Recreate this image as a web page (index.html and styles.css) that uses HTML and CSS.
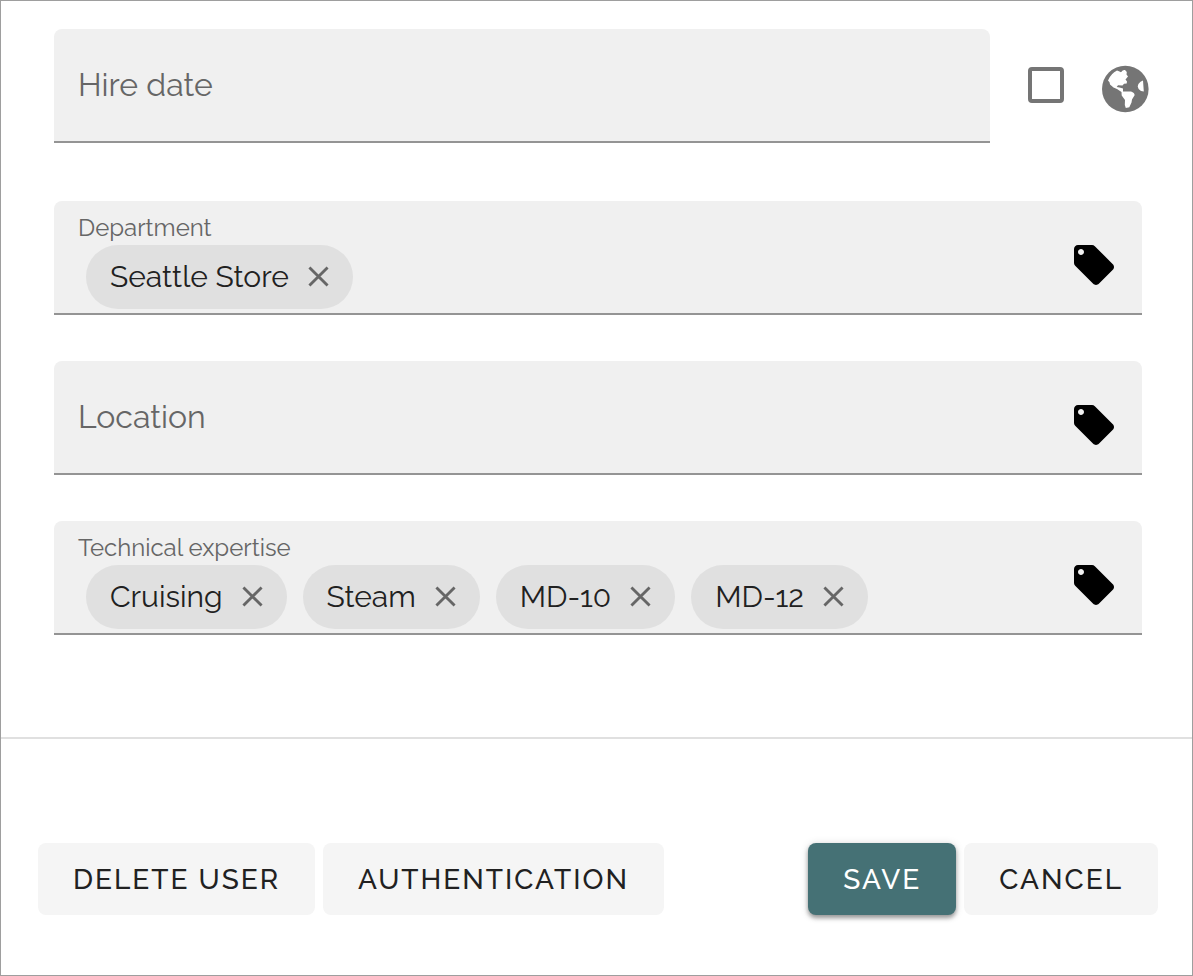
FILE: index.html
```html
<!DOCTYPE html>
<html lang="en">
<head>
<meta charset="utf-8">
<meta name="viewport" content="width=device-width, initial-scale=1">
<title>Edit user</title>
<link rel="stylesheet" href="styles.css">
</head>
<body>
<svg class="sprite" aria-hidden="true">
  <symbol id="tag" viewBox="0 0 24 24"><path d="M21.41 11.58l-9-9C12.05 2.22 11.55 2 11 2H4c-1.1 0-2 .9-2 2v7c0 .55.22 1.05.59 1.42l9 9c.36.36.86.58 1.41.58s1.05-.22 1.41-.59l7-7c.37-.36.59-.86.59-1.41s-.23-1.06-.59-1.42zM5.5 7C4.67 7 4 6.33 4 5.5S4.67 4 5.5 4 7 4.67 7 5.5 6.33 7 5.5 7z"/></symbol>
  <symbol id="close" viewBox="0 0 22 22"><path d="M1.5 1.5l19 19M20.5 1.5l-19 19" fill="none" stroke="currentColor" stroke-width="3"/></symbol>
</svg>
<form class="dialog">
  <div class="fields">
    <div class="row">
      <div class="field">
        <label class="placeholder" for="hire">Hire date</label>
        <input class="entry" id="hire" type="text">
      </div>
      <input class="check" type="checkbox" aria-label="Include hire date">
      <button class="icon-button" type="button" aria-label="Visibility">
        <svg class="globe" viewBox="0 0 48 48"><circle cx="24.3" cy="24" r="23.3" fill="#757575"/><path fill="#fff" d="M7 15.5Q10 8.500 16 5.600L18.500 6.500L20 7.300Q22 4.500 24 5L25.800 7L25.500 9.500L27 11.500L24.500 14.500L26 16.500L25.700 18.500L23 18.800L21.500 20.500L17 20.300L15.700 22L18.500 22.500L22 23.500L22 26.500H30Q33.700 27.800 33.600 30.200L31 34.500L30.500 37.500L28.300 42.200L24.800 43L23.800 40L24 35L20.700 30.500L20.500 27L16 24L12.500 22.500L9 19.500L8.500 17.200ZM42 15.5L39.500 16.700Q37 18.500 36.700 21.500Q37 24.500 40 26L42.800 26.500Z"/></svg>
      </button>
    </div>
    <div class="field">
      <label class="caption" for="department">Department</label>
      <div class="chips">
        <span class="chip">Seattle Store<button class="remove" type="button" aria-label="Remove Seattle Store"><svg><use href="#close"/></svg></button></span>
        <input class="chip-entry" id="department" type="text">
      </div>
      <button class="tag-button" type="button" aria-label="Choose department"><svg><use href="#tag"/></svg></button>
    </div>
    <div class="field">
      <label class="placeholder" for="location">Location</label>
      <input class="entry" id="location" type="text">
      <button class="tag-button" type="button" aria-label="Choose location"><svg><use href="#tag"/></svg></button>
    </div>
    <div class="field">
      <label class="caption" for="expertise">Technical expertise</label>
      <div class="chips">
        <span class="chip">Cruising<button class="remove" type="button" aria-label="Remove Cruising"><svg><use href="#close"/></svg></button></span>
        <span class="chip">Steam<button class="remove" type="button" aria-label="Remove Steam"><svg><use href="#close"/></svg></button></span>
        <span class="chip">MD-10<button class="remove" type="button" aria-label="Remove MD-10"><svg><use href="#close"/></svg></button></span>
        <span class="chip">MD-12<button class="remove" type="button" aria-label="Remove MD-12"><svg><use href="#close"/></svg></button></span>
        <input class="chip-entry" id="expertise" type="text">
      </div>
      <button class="tag-button" type="button" aria-label="Choose technical expertise"><svg><use href="#tag"/></svg></button>
    </div>
  </div>
  <div class="actions">
    <button class="button" type="button">DELETE USER</button>
    <button class="button" type="button">AUTHENTICATION</button>
    <span class="spacer"></span>
    <button class="button primary" type="submit">SAVE</button>
    <button class="button" type="button">CANCEL</button>
  </div>
</form>
</body>
</html>
```
FILE: styles.css
```css
* { box-sizing: border-box; }
body { margin: 0; background: #fff; font-family: Raleway, Lato, sans-serif; color: #212121; }
button, input { font: inherit; margin: 0; padding: 0; border: 0; background: none; color: inherit; }
button { cursor: pointer; }
svg { display: block; }
.sprite { position: absolute; width: 0; height: 0; }
.dialog { min-height: 100vh; border: 1px solid #9e9e9e; display: flex; flex-direction: column; }
.fields { padding: 28px 50px 102px 53px; display: flex; flex-direction: column; gap: 46px; border-bottom: 2px solid #e0e0e0; }
.row { display: flex; align-items: flex-start; margin: 0 -7px 12px 0; }
.field { position: relative; flex: 1; height: 114px; background: #f0f0f0; border-bottom: 2px solid #949494; border-radius: 8px 8px 0 0; }
.fields > .field { flex: none; }
.placeholder { position: absolute; left: 24px; top: 36px; font-size: 32px; line-height: 40px; color: #666; }
.entry { display: block; width: 100%; height: 100%; padding: 0 24px; font-size: 32px; outline: 0; }
.caption { display: block; padding: 11px 24px 1px; font-size: 24px; line-height: 32px; color: #666; }
.chips { display: flex; gap: 16px; padding: 0 96px 0 32px; }
.chip { display: flex; align-items: center; gap: 19px; height: 64px; padding: 0 24px 2px; border-radius: 32px; background: #e0e0e0; font-size: 30px; white-space: nowrap; }
.remove { color: #666; }
.remove svg { width: 21px; height: 21px; }
.chip-entry { flex: 1; min-width: 0; outline: 0; }
.tag-button { position: absolute; right: 24px; top: 40px; color: #000; }
.tag-button svg { width: 48px; height: 48px; fill: currentColor; }
.check { appearance: none; width: 36px; height: 36px; border: 4px solid #757575; border-radius: 4px; margin: 38px 37px 0 38px; }
.icon-button { margin-top: 36px; }
.globe { width: 48px; height: 48px; }
.actions { display: flex; gap: 8px; padding: 104px 34px 60px 37px; }
.spacer { flex: 1; }
.button { height: 72px; padding: 0 35px; border-radius: 8px; background: #f5f5f5; font-size: 28px; font-weight: 500; letter-spacing: 2px; }
.primary { background: #457175; color: #fff; box-shadow: 0 3px 4px rgba(0,0,0,.35), 0 1px 8px rgba(0,0,0,.15); }
```
